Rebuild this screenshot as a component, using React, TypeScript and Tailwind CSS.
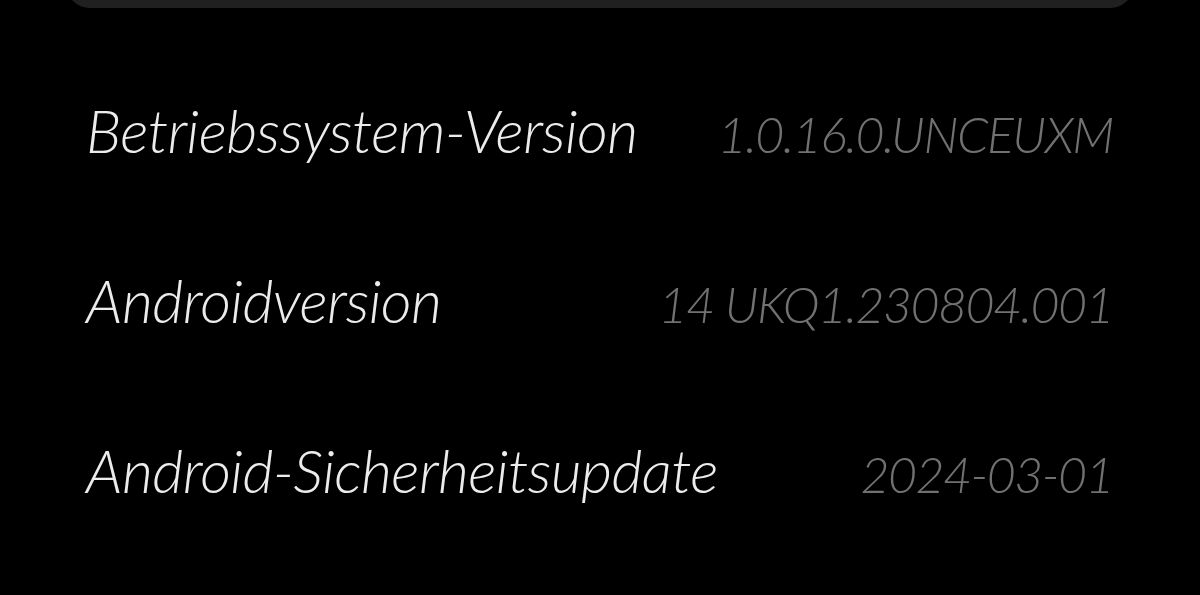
const rows = [
  { label: "Betriebssystem-Version", value: "1.0.16.0.UNCEUXM" },
  { label: "Androidversion", value: "14 UKQ1.230804.001" },
  { label: "Android-Sicherheitsupdate", value: "2024-03-01" },
];

export default function App() {
  return (
    <div className="min-h-[595px] bg-black font-['Lato',sans-serif] italic overflow-hidden">
      {/* bottom edge of the card above */}
      <div className="mx-[66px] -mt-[40px] h-[48px] rounded-[28px] bg-[#202020]" />

      <div className="flex flex-col gap-[98px] pt-[86px] pl-[86px] pr-[87px]">
        {rows.map((row) => (
          <div key={row.label} className="flex items-baseline justify-between h-[72px]">
            <span className="text-[60px] leading-[72px] font-light text-[#ececec] tracking-[-0.6px]">
              {row.label}
            </span>
            <span className="text-[50px] leading-[72px] font-light text-[#717171] tracking-[-1.5px]">
              {row.value}
            </span>
          </div>
        ))}
      </div>
    </div>
  );
}
